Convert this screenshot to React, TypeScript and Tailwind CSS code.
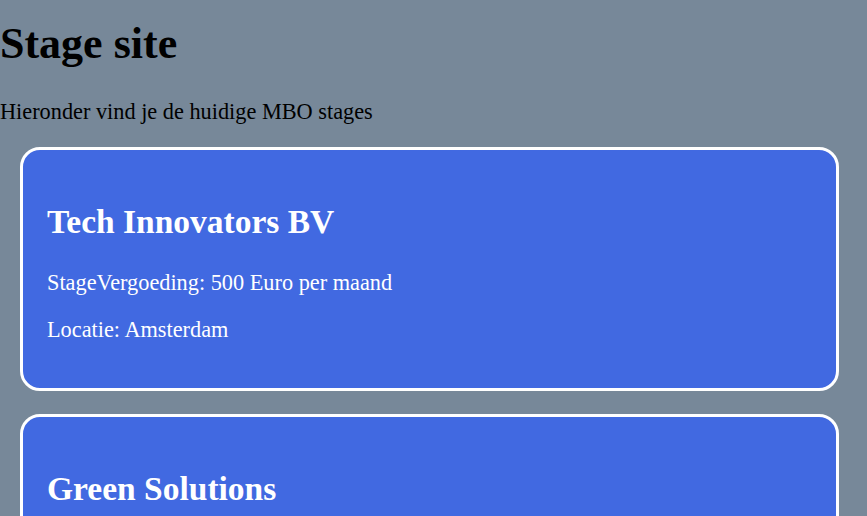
const stages = [
  { naam: "Tech Innovators BV", vergoeding: "500 Euro per maand", locatie: "Amsterdam" },
  { naam: "Green Solutions", vergoeding: "450 Euro per maand", locatie: "Utrecht" },
  { naam: "Creative Media Lab", vergoeding: "400 Euro per maand", locatie: "Rotterdam" },
];

export default function App() {
  return (
    <div className="min-h-screen bg-[#778899] font-['Liberation_Serif',serif] text-[22.3px] leading-[1.15] text-black flow-root">
      <h1 className="mt-[19px] mb-[29px] text-[44px] font-bold leading-[1.15]">Stage site</h1>
      <p className="mb-[23px]">Hieronder vind je de huidige MBO stages</p>
      {stages.map((stage, i) => (
        <div
          key={i}
          className="ml-[20px] mr-[28px] mb-[23px] rounded-[20px] border-[3px] border-white bg-[#4169e1] px-[24px] pt-[26px] pb-[23px] text-white flow-root"
        >
          <h2 className="mt-[27px] mb-[28px] text-[33.5px] font-bold leading-[1.15]">{stage.naam}</h2>
          <p className="mb-[22px]">StageVergoeding: {stage.vergoeding}</p>
          <p className="mb-[22px]">Locatie: {stage.locatie}</p>
        </div>
      ))}
    </div>
  );
}
